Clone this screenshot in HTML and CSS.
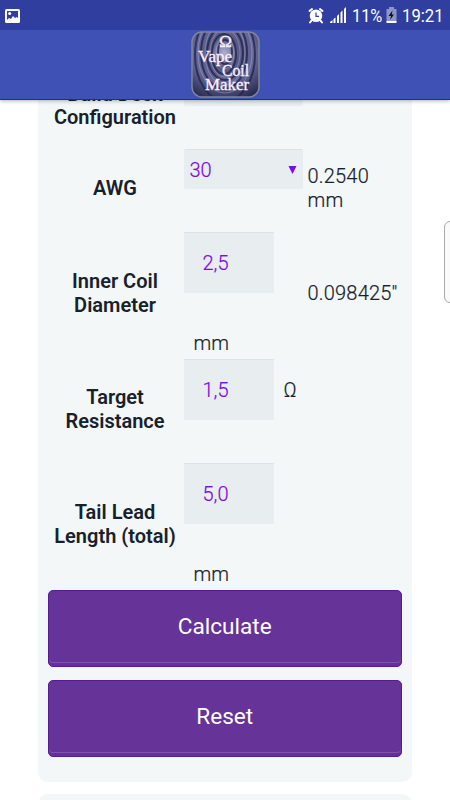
FILE: index.html
```html
<!DOCTYPE html>
<html lang="en">
<head>
<meta charset="utf-8">
<title>Vape Coil Maker</title>
<link rel="stylesheet" href="styles.css">
</head>
<body>
<header class="top">
  <div class="status">
    <svg class="picture" width="18" height="18" viewBox="0 0 18 18"><rect x="1" y="2" width="15" height="14" rx="1.5" fill="#fff"/><path d="M3 4h11v7l-1.500-1-1.500 1-2-2-2 3-2-1-2 2z" fill="#303f9f"/><circle cx="5.7" cy="6.5" r="1.5" fill="#fff"/></svg>
    <svg class="alarm" width="16" height="17" viewBox="0 0 16 17"><path d="M1.500 4 4 2M14.500 4 12 2M3.500 13.500 2 15.500M12.500 13.500l1.500 2" stroke="#fff" stroke-width="2" stroke-linecap="round"/><circle cx="8" cy="8.700" r="6.300" fill="#fff"/><path d="M8 5.500v3.800h3" fill="none" stroke="#303f9f" stroke-width="1.200"/></svg>
    <svg class="signal" width="17" height="17" viewBox="0 0 17 17" fill="#fff"><path d="M0 16v-1l2.500-2v3zM3.500 16v-4l2-1.500V16zM7 16V9l2-2v9zM10.500 16V5.500l2-2V16zM14 16V2l2-2v16z"/></svg>
    <span class="percent">11%</span>
    <svg class="battery" width="11" height="17" viewBox="0 0 11 17"><path d="M3 0h5v2h2.500v13H.500V2H3z" fill="#8d95cb"/><path d="M.500 14h10v2H.500z" fill="#fff"/><path d="M6.500 3.500 2.500 9H5l-1 4 4-5.500H5.800z" fill="#10131f"/></svg>
    <span class="clock">19:21</span>
  </div>
  <div class="appbar">
    <svg class="logo" width="69" height="67" viewBox="0 0 69 67">
      <defs>
        <radialGradient id="metal" cx=".48" cy=".32" r=".75"><stop offset="0" stop-color="#b0b1d4"/><stop offset=".3" stop-color="#565983"/><stop offset=".6" stop-color="#66699b"/><stop offset="1" stop-color="#2c2f55"/></radialGradient>
        <clipPath id="badge"><rect x="1" y="1" width="67" height="65" rx="10"/></clipPath>
      </defs>
      <rect x="1" y="1" width="67" height="65" rx="10" fill="url(#metal)"/>
      <g clip-path="url(#badge)" fill="none">
        <g stroke="#24264a" stroke-width="2" opacity=".8"><ellipse cx="34" cy="21" rx="7" ry="12"/><ellipse cx="33" cy="23" rx="12" ry="20"/><ellipse cx="34" cy="22" rx="18" ry="27"/><ellipse cx="33" cy="22" rx="23" ry="36"/><ellipse cx="34" cy="24" rx="30" ry="46"/></g>
        <g stroke="#a9abd3" stroke-width=".8" opacity=".6"><ellipse cx="34" cy="22" rx="9" ry="16"/><ellipse cx="34" cy="22" rx="15" ry="24"/><ellipse cx="34" cy="22" rx="20" ry="32"/><ellipse cx="34" cy="22" rx="27" ry="40"/></g>
      </g>
      <rect x="1" y="1" width="67" height="65" rx="10" fill="none" stroke="#80859b" stroke-width="1.500"/>
      <g class="logo-text"><text x="28" y="16" textLength="13" lengthAdjust="spacingAndGlyphs">Ω</text><text x="7" y="31" textLength="34" lengthAdjust="spacingAndGlyphs">Vape</text><text x="31" y="45" textLength="27" lengthAdjust="spacingAndGlyphs">Coil</text><text x="14" y="58.500" textLength="44" lengthAdjust="spacingAndGlyphs">Maker</text></g>
    </svg>
  </div>
</header>
<main class="page">
  <section class="card">
    <div class="row deck"><div class="label">Build Deck<br>Configuration</div><div class="select"></div></div>
    <div class="row awg"><div class="label">AWG</div><div class="select"><span>30</span><svg width="9" height="8" viewBox="0 0 9 8"><path d="M.500 0h8l-4 8z" fill="#7b0be0"/></svg></div><div class="note">0.2540<br>mm</div></div>
    <div class="row tall"><div class="label">Inner Coil<br>Diameter</div><div class="field"><div class="input">2,5</div><div class="unit">mm</div></div><div class="note">0.098425"</div></div>
    <div class="row target"><div class="label">Target<br>Resistance</div><div class="field inline"><div class="input">1,5</div><div class="unit">Ω</div></div></div>
    <div class="row tall"><div class="label">Tail Lead<br>Length (total)</div><div class="field"><div class="input">5,0</div><div class="unit">mm</div></div></div>
    <div class="actions"><button class="button">Calculate</button><button class="button">Reset</button></div>
  </section>
  <section class="card next"></section>
  <div class="edge-panel"></div>
</main>
</body>
</html>
```

FILE: styles.css
```css
* { box-sizing: border-box; }
body {
  margin: 0;
  height: 800px;
  display: flex;
  flex-direction: column;
  overflow: hidden;
  background: #fff;
  color: #17212b;
  font: 300 20px/24px Roboto, sans-serif;
}
.top {
  position: relative;
  z-index: 1;
  flex: none;
  background: #3f51b5;
  box-shadow: 0 1px 4px rgba(0, 0, 0, .3);
}
.status {
  height: 30px;
  display: flex;
  align-items: center;
  padding: 1px 7px 0 4px;
  background: #303f9f;
  color: #fff;
  font-size: 19px;
  font-weight: 400;
}
.picture { margin-right: auto; }
.alarm { margin-right: 6px; }
.signal { margin-right: 5px; }
.percent { width: 31px; margin-right: 3px; transform: scaleX(.86); transform-origin: left; }
.battery { margin-right: 5px; }
.clock { width: 41px; transform: scaleX(.88); transform-origin: left; }
.appbar {
  height: 70px;
  display: flex;
  justify-content: center;
  align-items: flex-start;
  padding-top: 1px;
  border-bottom: 1px solid #1a2f9e;
}
.logo-text {
  fill: #fdeefa;
  stroke: #fdeefa;
  stroke-width: .3px;
  font: 400 16px "Liberation Serif", serif;
}
.page {
  position: relative;
  flex: 1;
  min-height: 0;
  overflow: hidden;
}
.card {
  height: 682px;
  margin: 0 38px 12px 37.5px;
  padding: 0 10px;
  background: #f3f7f8;
  border-radius: 0 0 10px 10px;
}
.next { border-radius: 10px 10px 0 0; }
.row {
  display: grid;
  grid-template-columns: 135px 119px 1fr;
  column-gap: 1px;
}
.deck {
  height: 49px;
  grid-template-rows: 49px;
}
.awg { height: 83px; }
.tall { height: 127px; }
.target { height: 104px; }
.label {
  align-self: center;
  padding-bottom: 5px;
  font-weight: 600;
  text-align: center;
}
.deck .label {
  align-self: end;
  padding-bottom: 20px;
  line-height: 23px;
}
.select {
  height: 40px;
  display: flex;
  align-items: center;
  justify-content: space-between;
  padding: 1px 6px 0;
  background: #e8edef;
  border-top: 1px solid #dde2e4;
  border-radius: 2px;
  color: #7b0be0;
}
.deck .select { height: 6px; border-top: 0; }
.select,
.input,
.note,
.unit {
  -webkit-text-stroke: .2px currentColor;
}
.note {
  align-self: center;
  padding: 0 0 6px 4px;
  letter-spacing: .2px;
}
.field {
  display: flex;
  flex-direction: column;
}
.inline { flex-direction: row; }
.input {
  flex: none;
  width: 90px;
  height: 61px;
  padding: 18px 19px;
  background: #e8edef;
  border-top: 1px solid #dde2e4;
  color: #7b0be0;
}
.unit { margin: 38px 0 0 10px; }
.inline .unit { margin-top: 19px; }
.actions {
  display: grid;
  gap: 13px;
}
.button {
  height: 77px;
  padding: 0 0 3px;
  background: #663399;
  border: 1px solid #581a94;
  border-radius: 5px;
  box-shadow: inset 0 -3px #65309a, inset 0 -4px #7e54aa;
  color: #fff;
  font: 400 22.6px/28px Roboto, sans-serif;
}
.edge-panel {
  position: absolute;
  top: 121px;
  right: -8px;
  width: 14px;
  height: 82px;
  background: #fafafa;
  border: 1px solid #aaa;
  border-radius: 6px;
}
```
